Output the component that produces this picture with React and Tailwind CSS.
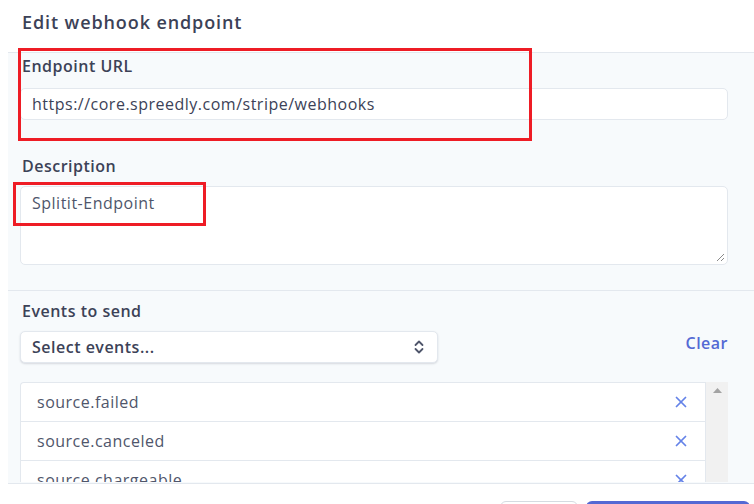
import { X } from "lucide-react";

const events = ["source.failed", "source.canceled", "source.chargeable"];

export default function App() {
  return (
    <div
      className="relative w-[754px] h-[504px] overflow-hidden bg-white text-[#3c4257]"
      style={{ fontFamily: '"Open Sans", "Noto Sans", sans-serif' }}
    >
      {/* header */}
      <div className="h-[52px] pl-[22px] pt-[10px]">
        <h1 className="text-[18px] tracking-[0.9px] font-semibold leading-[24px]">Edit webhook endpoint</h1>
      </div>

      {/* form panel */}
      <div className="ml-[8px] h-[432px] bg-[#f7fafc] border-t border-[#e3e8ee] border-b text-[16px] tracking-[0.5px]">
        <div className="pl-[12px] pr-[26px] pt-[1px] h-[238px] border-b border-[#e3e8ee]">
          <label className="block pl-[2px] font-semibold leading-[22px] pt-[1px]">Endpoint URL</label>
          <div className="mt-[11px] h-[32px] bg-white border border-[#e3e8ee] rounded-[5px] flex items-center px-[11px]">
            https://core.spreedly.com/stripe/webhooks
          </div>
          <label className="block pl-[2px] font-semibold leading-[22px] mt-[35px]">Description</label>
          <div className="relative mt-[9px] h-[79px] bg-white border border-[#e3e8ee] rounded-[5px] px-[11px] pt-[4px] text-[#4f566b]">
            Splitit-Endpoint
            <svg className="absolute right-[2px] bottom-[2px]" width="9" height="9" viewBox="0 0 9 9">
              <path d="M8 1 L1 8 M8 5 L5 8" stroke="#8a8a8a" strokeWidth="1" />
            </svg>
          </div>
        </div>

        <div className="pl-[12px] pr-[26px] pt-[9px]">
          <label className="block pl-[2px] font-semibold leading-[22px]">Events to send</label>
          <div className="mt-[9px] flex items-center justify-between">
            <div className="w-[418px] h-[32px] bg-white rounded-[5px] border border-[#e3e8ee] shadow-[0_1px_2px_rgba(60,66,87,0.18)] flex items-center justify-between pl-[11px] pr-[12px]">
              <span className="font-semibold">Select events...</span>
              <svg width="12" height="16" viewBox="0 0 12 16" fill="none" stroke="#4f566b" strokeWidth="1.8" strokeLinecap="round" strokeLinejoin="round">
                <path d="M2.5 6 L6 2.5 L9.5 6" />
                <path d="M2.5 10 L6 13.5 L9.5 10" />
              </svg>
            </div>
            <button className="font-semibold text-[#5469d4] -mt-[8px] tracking-[0.5px]">Clear</button>
          </div>

          <div className="mt-[19px] flex h-[100px]">
            <div className="flex-1 bg-white border border-[#e3e8ee] border-b-0 rounded-tl-[4px] overflow-hidden">
              {events.map((e) => (
                <div
                  key={e}
                  className="h-[39px] flex items-center justify-between pl-[16px] pr-[15px] border-b border-[#e3e8ee] text-[#4f566b]"
                >
                  <span>{e}</span>
                  <X size={18} strokeWidth={2.3} color="#6482e8" />
                </div>
              ))}
            </div>
            <div className="w-[22px] bg-[#f1f1f1] flex justify-center pt-[6px]">
              <svg width="9" height="5" viewBox="0 0 9 5">
                <path d="M0 5 L4.5 0 L9 5 Z" fill="#a3a3a3" />
              </svg>
            </div>
          </div>
        </div>
      </div>

      {/* footer */}
      <div className="flex justify-end gap-[8px] pr-[4px] pt-[17px]">
        <button className="w-[78px] h-[30px] rounded-[6px] border border-[#d5dbe1] bg-white text-[14px] font-semibold">
          Cancel
        </button>
        <button className="w-[164px] h-[30px] rounded-[6px] bg-[#5469d4] text-white text-[14px] font-semibold">
          Save endpoint
        </button>
      </div>

      {/* annotation boxes */}
      <div className="absolute left-[18px] top-[48px] w-[514px] h-[93px] border-[3px] border-[#ee1c25]" />
      <div className="absolute left-[13px] top-[182px] w-[193px] h-[44px] border-[3px] border-[#ee1c25]" />
    </div>
  );
}
